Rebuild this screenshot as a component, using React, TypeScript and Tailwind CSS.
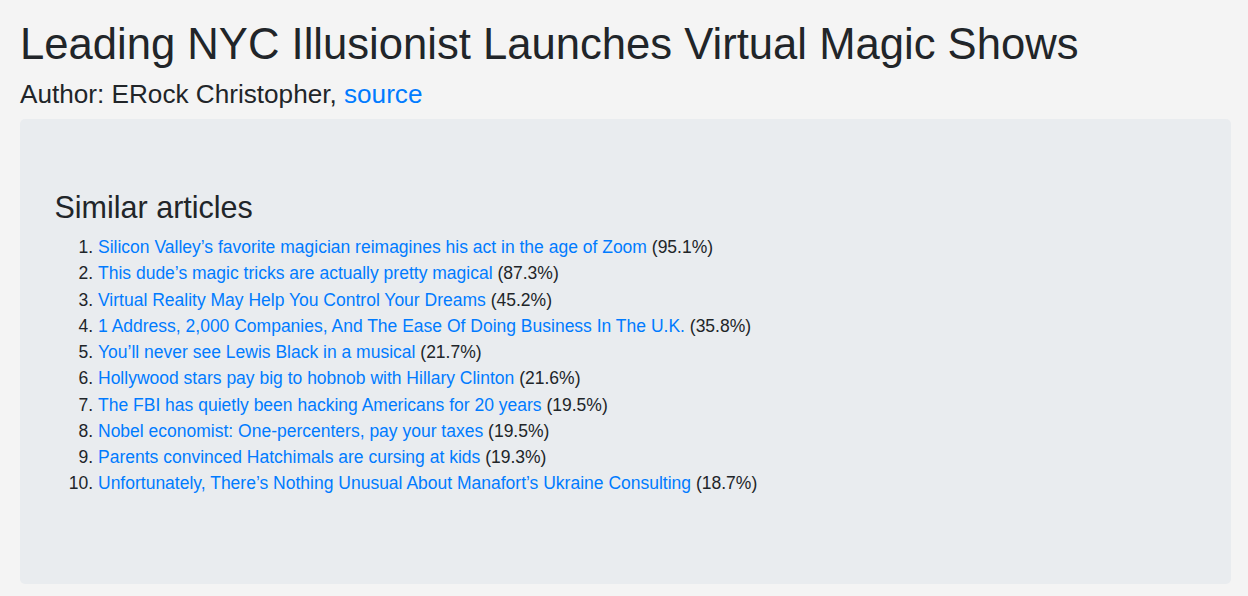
import React from 'react';

const ARTICLES: { title: string; score: string }[] = [
  { title: 'Silicon Valley’s favorite magician reimagines his act in the age of Zoom', score: '95.1%' },
  { title: 'This dude’s magic tricks are actually pretty magical', score: '87.3%' },
  { title: 'Virtual Reality May Help You Control Your Dreams', score: '45.2%' },
  { title: '1 Address, 2,000 Companies, And The Ease Of Doing Business In The U.K.', score: '35.8%' },
  { title: 'You’ll never see Lewis Black in a musical', score: '21.7%' },
  { title: 'Hollywood stars pay big to hobnob with Hillary Clinton', score: '21.6%' },
  { title: 'The FBI has quietly been hacking Americans for 20 years', score: '19.5%' },
  { title: 'Nobel economist: One-percenters, pay your taxes', score: '19.5%' },
  { title: 'Parents convinced Hatchimals are cursing at kids', score: '19.3%' },
  { title: 'Unfortunately, There’s Nothing Unusual About Manafort’s Ukraine Consulting', score: '18.7%' },
];

export default function App() {
  return (
    <div className="min-h-[596px] bg-[#f4f4f4] text-[#212529] font-['Liberation_Sans',Arial,sans-serif] pt-[17.6px] pl-[20px] pr-[17px] pb-[13px]">
      {/* Title */}
      <h1 className="text-[43.62px] leading-[52.8px] font-normal mb-[8.8px]">
        Leading NYC Illusionist Launches Virtual Magic Shows
      </h1>
      <h4 className="text-[26.15px] leading-[31.68px] font-normal mb-[7.8px]">
        Author: ERock Christopher,{' '}
        <a href="#" className="text-[#007bff] hover:underline">source</a>
      </h4>

      {/* Jumbotron */}
      <div className="bg-[#e9ecef] rounded-[5px] px-[34.5px] pt-[70.5px] pb-[71px]">
        <h3 className="text-[30.5px] leading-[36.96px] font-normal mb-[8px]">Similar articles</h3>
        <ol className="list-decimal pl-[43.5px] text-[17.5px] leading-[26.25px] mb-[16px]">
          {ARTICLES.map((a) => (
            <li key={a.title}>
              <a href="#" className="text-[#007bff] hover:underline">{a.title}</a> ({a.score})
            </li>
          ))}
        </ol>
      </div>
    </div>
  );
}
